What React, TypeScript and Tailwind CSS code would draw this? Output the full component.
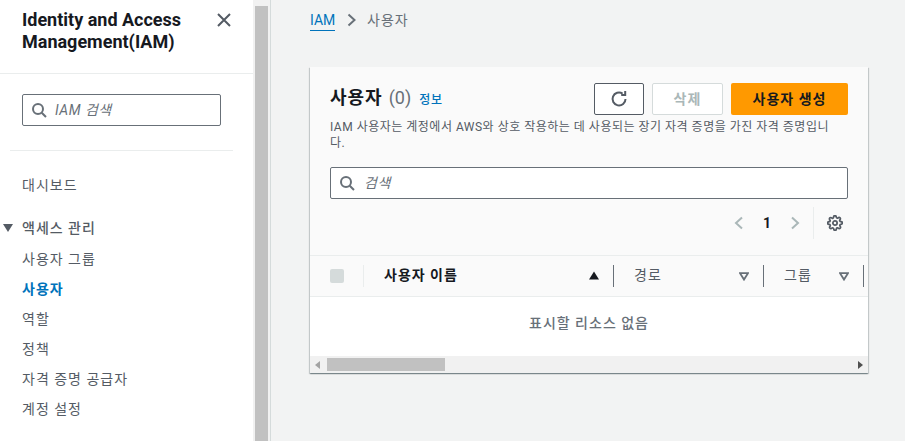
import React from "react";

const FONT = "[font-family:'Roboto','Noto_Sans_CJK_KR',sans-serif]";

function SearchIcon() {
  return (
    <svg width="16" height="16" viewBox="0 0 16 16" fill="none" stroke="#687078" strokeWidth="2" className="shrink-0">
      <circle cx="7" cy="7" r="5" />
      <path d="M10.7 10.7 15 15" />
    </svg>
  );
}

function NavItem({ label, active }: { label: string; active?: boolean }) {
  return (
    <div className={`h-[30px] flex items-center pl-[22px] text-[14px] tracking-[1px] ${active ? "font-bold text-[#0073bb]" : "text-[#545b64]"}`}>
      {label}
    </div>
  );
}

function HeaderCell({ label, width, sort }: { label: string; width: string; sort: "up" | "down" }) {
  return (
    <div className={`${width} h-[40px] flex items-center pl-[20px] pr-[15px] justify-between relative`}>
      <span className={`text-[14px] tracking-[1px] -mt-[1px] ${sort === "up" ? "font-bold text-[#16191f]" : "text-[#545b64]"}`}>{label}</span>
      {sort === "up" ? (
        <svg width="12" height="10" viewBox="0 0 12 10" className="shrink-0 -mr-px"><path d="M6 .5 11 8.5H1Z" fill="#16191f" /></svg>
      ) : (
        <svg width="10" height="9" viewBox="0 0 10 9" className="shrink-0"><path d="M1 1.2h8L5 7.6Z" fill="none" stroke="#687078" strokeWidth="1.8" /></svg>
      )}
      <div className="absolute right-0 top-[9px] h-[22px] w-px bg-[#687078]" />
    </div>
  );
}

export default function App() {
  return (
    <div className={`${FONT} flex h-[441px] w-[905px] overflow-hidden bg-[#f2f3f3]`}>
      <aside className="w-[253px] h-full shrink-0 bg-white">
        <div className="h-[74px] border-b border-[#eaeded] pl-[22px] pr-[21px] pt-[9px] flex justify-between">
          <h1 className="text-[18px] leading-[22px] font-bold text-[#16191f]">
            Identity and Access<br />Management(IAM)
          </h1>
          <svg width="16" height="16" viewBox="0 0 16 16" fill="none" stroke="#545b64" strokeWidth="2" className="mt-[3px] shrink-0">
            <path d="M2 2l12 12M14 2 2 14" />
          </svg>
        </div>
        <div className="pl-[22px] pt-[20px]">
          <div className="w-[199px] h-[32px] border border-[#687078] rounded-[2px] flex items-center pl-[8px] gap-[8px]">
            <SearchIcon />
            <span className="italic text-[14px] tracking-[0.5px] text-[#687078]">IAM 검색</span>
          </div>
        </div>
        <div className="ml-[10px] w-[223px] mt-[24px] border-t border-[#eaeded]" />
        <div className="pt-[19px]"><NavItem label="대시보드" /></div>
        <div className="mt-[13px] h-[30px] flex items-center text-[14px] tracking-[1px] font-medium text-[#545b64]">
          <svg width="10" height="8" viewBox="0 0 10 8" className="ml-[3px] mr-[9px]"><path d="M0 0h10L5 8Z" fill="#545b64" /></svg>
          액세스 관리
        </div>
        <div className="mt-[1px]">
          <NavItem label="사용자 그룹" />
          <NavItem label="사용자" active />
          <NavItem label="역할" />
          <NavItem label="정책" />
          <NavItem label="자격 증명 공급자" />
          <NavItem label="계정 설정" />
        </div>
      </aside>

      <div className="w-[18px] h-full shrink-0 bg-[#f1f1f1] pt-[6px] pl-[2px] border-r border-[#d5dbdb]">
        <div className="w-[13px] h-full bg-[#c1c1c1]" />
      </div>

      <main className="flex-1 pl-[39px] pt-[9px]">
        <nav className="flex items-center h-[22px] text-[14px]">
          <span className="text-[#0073bb] border-b border-[#0073bb] leading-[20px] w-[25px]">IAM</span>
          <svg width="10" height="14" viewBox="0 0 10 14" fill="none" stroke="#687078" strokeWidth="2" className="ml-[12px] mr-[10px]">
            <path d="M1.5 1.5 7.5 7l-6 5.5" />
          </svg>
          <span className="text-[#687078] tracking-[1px]">사용자</span>
        </nav>

        <section className="mt-[36px] w-[558px] h-[306px] bg-[#fafafa] shadow-[0_1px_1px_0_rgba(0,28,36,0.3),1px_1px_1px_0_rgba(0,28,36,0.15),-1px_1px_1px_0_rgba(0,28,36,0.15)] flex flex-col">
          <div className="px-[20px] pt-[16px] h-[188px] shrink-0">
            <div className="flex justify-between h-[32px]">
              <div className="flex items-baseline pt-[2px]">
                <h2 className="text-[18px] tracking-[1px] font-bold text-[#16191f] leading-[26px]">사용자</h2>
                <span className="ml-[6px] text-[18px] text-[#687078] leading-[26px]">(0)</span>
                <span className="ml-[8px] text-[12px] tracking-[0.7px] font-medium text-[#0073bb]">정보</span>
              </div>
              <div className="flex gap-[8px]">
                <div className="w-[50px] h-[32px] bg-white border border-[#545b64] rounded-[2px] flex items-center justify-center">
                  <svg width="18" height="18" viewBox="0 0 18 18" fill="none" stroke="#545b64" strokeWidth="2">
                    <path d="M15.5 9A6.5 6.5 0 1 1 12.6 3.6" />
                    <path d="M15.2 1v4h-4" />
                  </svg>
                </div>
                <div className="w-[71px] h-[32px] bg-white border border-[#d5dbdb] rounded-[2px] flex items-center justify-center text-[14px] tracking-[1px] font-bold text-[#aab7b8]">삭제</div>
                <div className="w-[117px] h-[32px] bg-[#ff9900] rounded-[2px] flex items-center justify-center text-[14px] tracking-[1px] font-bold text-[#16191f]">사용자 생성</div>
              </div>
            </div>
            <p className="mt-[4px] w-[510px] text-[12px] leading-[16px] tracking-[0.5px] text-[#545b64]">
              IAM 사용자는 계정에서 AWS와 상호 작용하는 데 사용되는 장기 자격 증명을 가진 자격 증명입니다.
            </p>
            <div className="mt-[16px] h-[32px] bg-white border border-[#687078] rounded-[2px] flex items-center pl-[8px] gap-[9px]">
              <SearchIcon />
              <span className="italic text-[14px] tracking-[0.5px] text-[#687078]">검색</span>
            </div>
            <div className="mt-[8px] h-[32px] flex items-center justify-end pr-[5px]">
              <svg width="10" height="14" viewBox="0 0 10 14" fill="none" stroke="#aab7b8" strokeWidth="2"><path d="M8 1.5 2 7l6 5.5" /></svg>
              <span className="mx-[19px] text-[14px] font-bold text-[#16191f]">1</span>
              <svg width="10" height="14" viewBox="0 0 10 14" fill="none" stroke="#aab7b8" strokeWidth="2"><path d="M2 1.5 8 7l-6 5.5" /></svg>
              <div className="ml-[13px] h-[32px] border-l border-[#eaeded] pl-[13px] flex items-center">
                <svg width="16" height="16" viewBox="0 0 24 24" fill="none" stroke="#545b64" strokeWidth="2.6" strokeLinejoin="round">
                  <circle cx="12" cy="12" r="3.2" />
                  <path d="M19.4 15a1.65 1.65 0 0 0 .33 1.82l.06.06a2 2 0 1 1-2.83 2.83l-.06-.06a1.65 1.65 0 0 0-2.8 1.17V21a2 2 0 0 1-4 0v-.09a1.65 1.65 0 0 0-2.8-1.17l-.06.06a2 2 0 1 1-2.83-2.83l.06-.06a1.65 1.65 0 0 0-1.17-2.8H3a2 2 0 0 1 0-4h.09a1.65 1.65 0 0 0 1.17-2.8l-.06-.06a2 2 0 1 1 2.83-2.83l.06.06a1.65 1.65 0 0 0 2.8-1.17V3a2 2 0 0 1 4 0v.09a1.65 1.65 0 0 0 2.8 1.17l.06-.06a2 2 0 1 1 2.83 2.83l-.06.06a1.65 1.65 0 0 0 1.17 2.8H21a2 2 0 0 1 0 4h-.09a1.65 1.65 0 0 0-1.51 1z" />
                </svg>
              </div>
            </div>
          </div>

          <div className="flex h-[42px] shrink-0 border-y border-[#eaeded] overflow-hidden">
            <div className="w-[54px] h-[40px] flex items-center pl-[20px] relative">
              <div className="w-[14px] h-[14px] bg-[#d5dbdb] rounded-[2px]" />
              <div className="absolute right-0 top-[9px] h-[22px] w-px bg-[#eaeded]" />
            </div>
            <HeaderCell label="사용자 이름" width="w-[250px]" sort="up" />
            <HeaderCell label="경로" width="w-[150px]" sort="down" />
            <HeaderCell label="그룹" width="w-[100px]" sort="down" />
          </div>

          <div className="flex-1 bg-white flex items-center justify-center pb-[6px] text-[14px] tracking-[1px] font-medium text-[#687078]">
            표시할 리소스 없음
          </div>

          <div className="h-[17px] shrink-0 bg-[#f1f1f1] flex items-center justify-between pl-[5px] pr-[5px]">
            <div className="flex items-center gap-[7px]">
              <svg width="5" height="8" viewBox="0 0 5 8"><path d="M5 0v8L0 4Z" fill="#a3a3a3" /></svg>
              <div className="w-[118px] h-[13px] bg-[#c1c1c1]" />
            </div>
            <svg width="5" height="8" viewBox="0 0 5 8"><path d="M0 0v8l5-4Z" fill="#505050" /></svg>
          </div>
        </section>
      </main>
    </div>
  );
}
